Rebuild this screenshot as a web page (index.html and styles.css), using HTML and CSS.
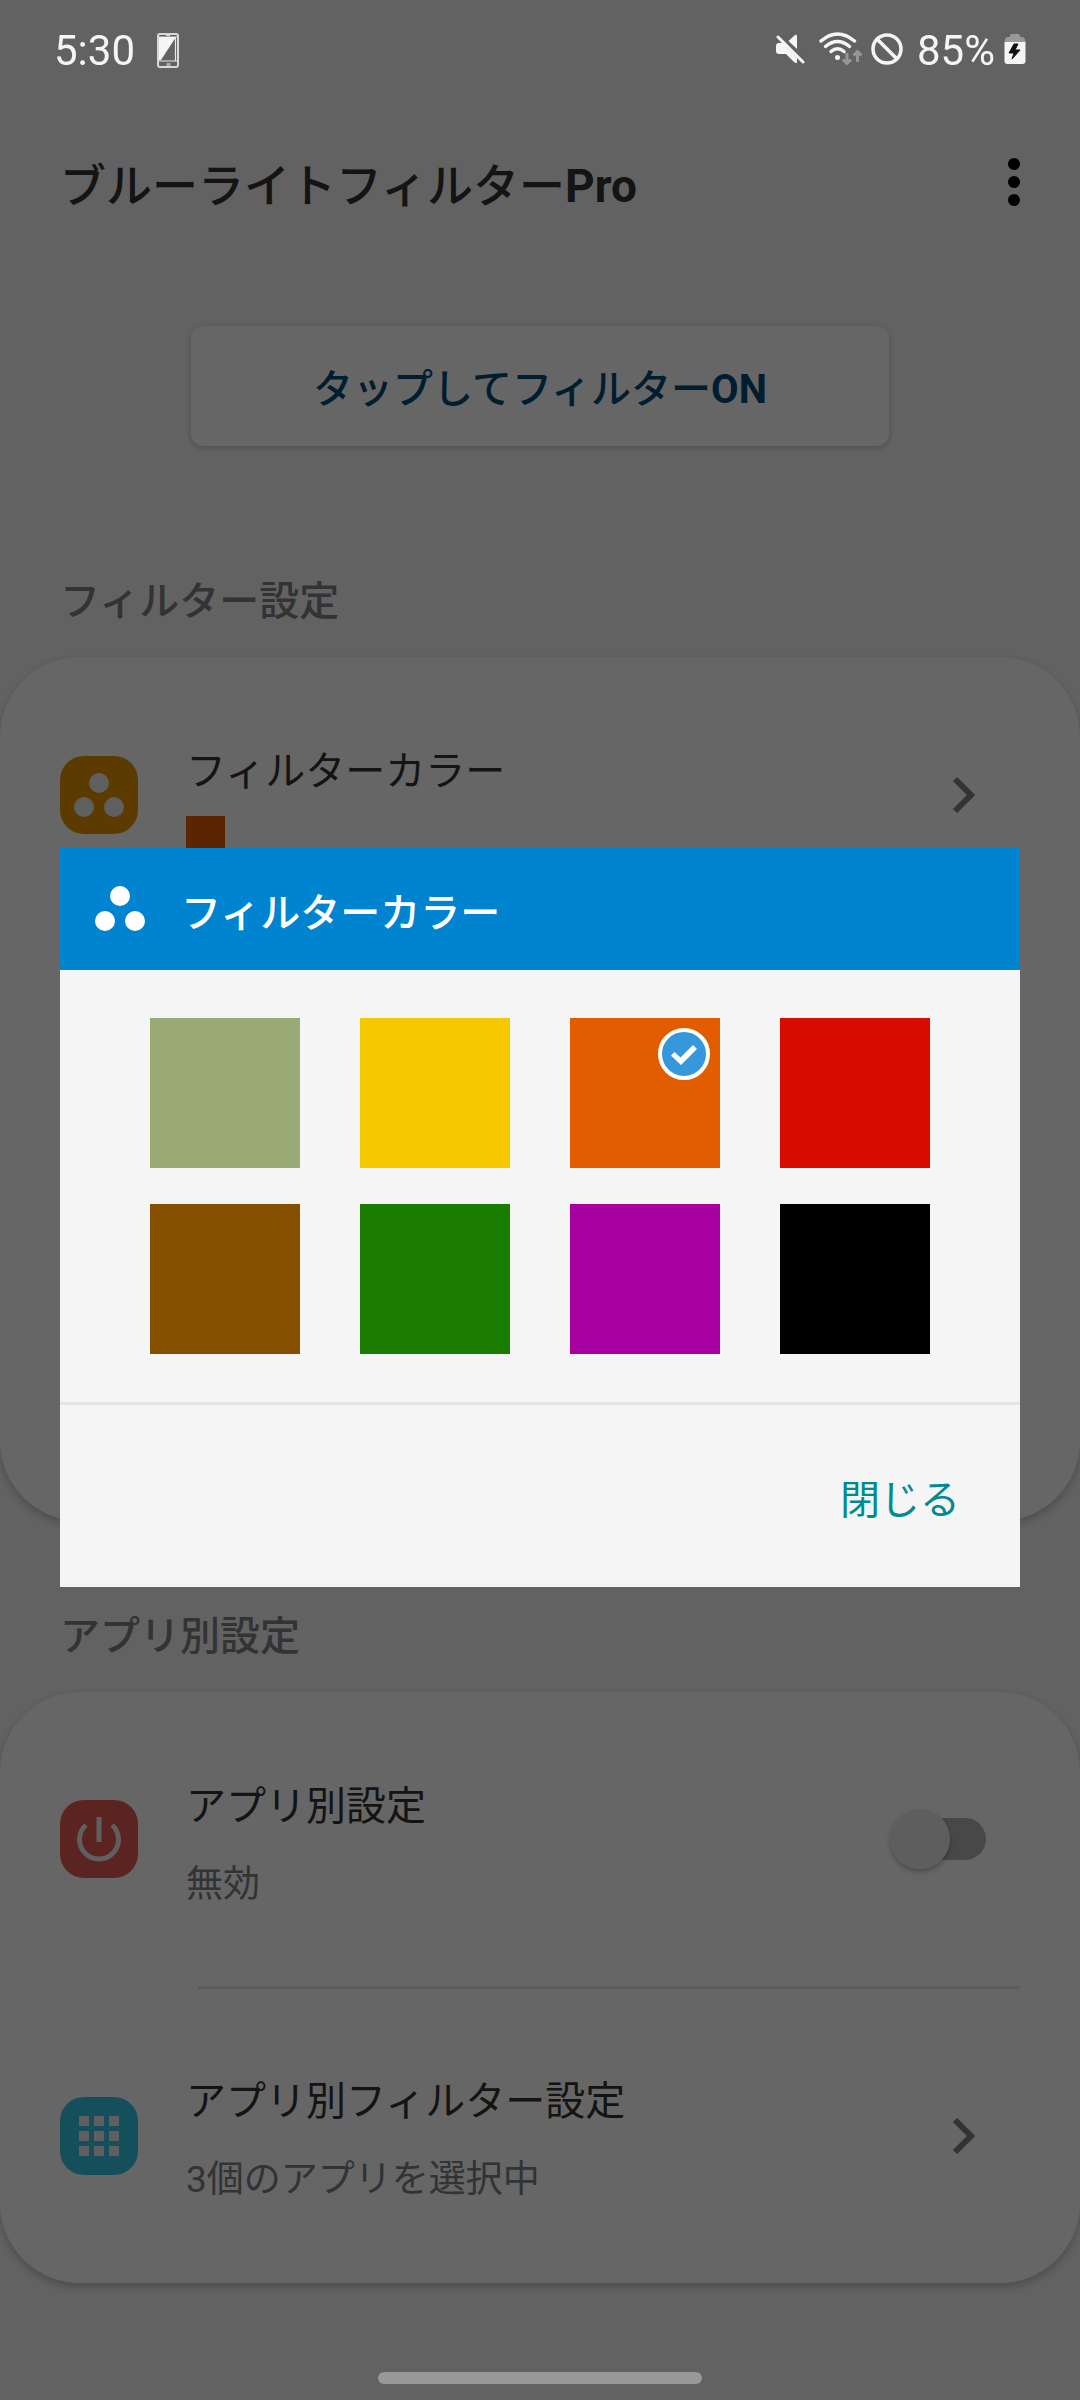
FILE: index.html
```html
<!DOCTYPE html>
<html lang="ja">
<head>
  <meta charset="utf-8">
  <meta name="viewport" content="width=device-width, initial-scale=1">
  <title>ブルーライトフィルターPro</title>
  <link rel="stylesheet" href="styles.css">
</head>
<body>
  <div class="status">
    <div class="status-left">
      <span class="status-text">5:30</span>
      <svg class="phone-icon" width="22" height="36" viewBox="0 0 22 36" aria-hidden="true">
        <rect x="1" y="1" width="20" height="33" rx="2" fill="none" stroke="#d8d8d8" stroke-width="2"/>
        <path d="M2 4H20M9 2.500h4" stroke="#d8d8d8" stroke-width="1.200"/>
        <path d="M2 4H19L4 27H2Z" fill="#f5f5f5"/>
        <path d="M2 28H20M18.500 4V28" stroke="#e6e6e6" stroke-width="1.200"/>
        <rect x="9.500" y="30" width="4" height="3" fill="#aaa"/>
      </svg>
    </div>
    <div class="status-right">
      <svg width="30" height="32" viewBox="0 0 30 32" aria-hidden="true">
        <path d="M1 13q0-3 3-3h4l14 15v5q-2 0-3-1L11 21H4q-3 0-3-3zM13.500 8 20 2q2-1 2 1v13z" fill="#f5f5f5"/>
        <path d="M5 2 29 26" stroke="#626262" stroke-width="2"/>
        <path d="M3 4 28 29" stroke="#f5f5f5" stroke-width="3" stroke-linecap="round"/>
      </svg>
      <svg class="wifi-icon" width="44" height="34" viewBox="0 0 44 34" aria-hidden="true">
        <g fill="none" stroke="#f5f5f5" stroke-width="3.500" stroke-linecap="round">
          <path d="M2 9Q18.500-5 35.500 9"/>
          <path d="M6.500 14.500Q18.500 4.500 30.500 14.500"/>
          <path d="M12 19.500Q18.500 14 25 19.500"/>
        </g>
        <circle cx="18.500" cy="25.500" r="2.500" fill="#f5f5f5"/>
        <g fill="none" stroke="#969696" stroke-width="3">
          <path d="M28 21V31M24 27.500 28 31.500 32 27.500"/>
          <path d="M38.500 30V20M34.500 23.500 38.500 19.500 42.500 23.500"/>
        </g>
      </svg>
      <svg class="block-icon" width="32" height="32" viewBox="0 0 32 32" aria-hidden="true">
        <circle cx="16" cy="16" r="14" fill="none" stroke="#f5f5f5" stroke-width="3.500"/>
        <path d="M6.500 6.500 25.500 25.500" stroke="#f5f5f5" stroke-width="3.500"/>
      </svg>
      <span class="status-text">85%</span>
      <svg class="battery-icon" width="22" height="32" viewBox="0 0 22 32" aria-hidden="true">
        <path d="M6 4V3q0-2 2-2h6q2 0 2 2v1h2q3 0 3.500 5H.500Q1 4 4 4z" fill="#999"/>
        <path d="M.500 9h21v19q0 3-3 3h-15q-3 0-3-3z" fill="#f5f5f5"/>
        <path d="M10 11 5 20h5l-2 6 8-9h-5l3-6z" fill="#111" stroke="#111" stroke-linejoin="round"/>
      </svg>
    </div>
  </div>

  <header class="app-bar">
    <h1 class="app-title">ブルーライトフィルター<span class="latin">Pro</span></h1>
    <button class="menu-button" type="button" aria-label="メニュー">
      <svg width="12" height="48" viewBox="0 0 12 48" aria-hidden="true">
        <circle cx="6" cy="6" r="6"/><circle cx="6" cy="24" r="6"/><circle cx="6" cy="42" r="6"/>
      </svg>
    </button>
  </header>

  <main>
    <div class="power">
      <button class="power-button" type="button">タップしてフィルター<span class="latin">ON</span></button>
    </div>

    <section class="group">
      <h2 class="group-title">フィルター設定</h2>
      <div class="card card-filter">
        <a class="row row-compact" href="#color">
          <svg class="row-icon" viewBox="0 0 78 78" aria-hidden="true">
            <rect width="78" height="78" rx="24" fill="#e69300"/>
            <g fill="#ededed"><circle cx="39" cy="27" r="10"/><circle cx="24" cy="51" r="10"/><circle cx="54" cy="51" r="10"/></g>
          </svg>
          <span class="row-text">
            <span class="row-title">フィルターカラー</span>
            <span class="current-color"></span>
          </span>
          <svg class="chevron" viewBox="0 0 44 44" aria-hidden="true"><path d="M13 6 29 22 13 38"/></svg>
        </a>
      </div>
    </section>

    <section class="group">
      <h2 class="group-title">アプリ別設定</h2>
      <div class="card">
        <label class="row">
          <svg class="row-icon" viewBox="0 0 78 78" aria-hidden="true">
            <rect width="78" height="78" rx="24" fill="#e35b53"/>
            <path d="M26 25A19.500 19.500 0 1 0 52 25M39 17V42" fill="none" stroke="#ededed" stroke-width="5"/>
          </svg>
          <span class="row-text">
            <span class="row-title">アプリ別設定</span>
            <span class="row-note">無効</span>
          </span>
          <input class="switch" type="checkbox" role="switch">
        </label>
        <hr class="row-divider">
        <a class="row" href="#apps">
          <svg class="row-icon" viewBox="0 0 78 78" aria-hidden="true">
            <rect width="78" height="78" rx="24" fill="#34c6e4"/>
            <path d="M19 19h10v10H19zM34 19h10v10H34zM49 19h10v10H49zM19 34h10v10H19zM34 34h10v10H34zM49 34h10v10H49zM19 49h10v10H19zM34 49h10v10H34zM49 49h10v10H49z" fill="#ededed"/>
          </svg>
          <span class="row-text">
            <span class="row-title">アプリ別フィルター設定</span>
            <span class="row-note"><span class="latin">3</span>個のアプリを選択中</span>
          </span>
          <svg class="chevron" viewBox="0 0 44 44" aria-hidden="true"><path d="M13 6 29 22 13 38"/></svg>
        </a>
      </div>
    </section>
  </main>

  <div class="home-bar"></div>

  <div class="scrim">
    <div class="dialog" role="dialog" aria-modal="true" aria-labelledby="dialog-title">
      <div class="dialog-head">
        <svg width="50" height="46" viewBox="0 0 50 46" fill="#fff" aria-hidden="true">
          <circle cx="25" cy="10" r="10"/><circle cx="10" cy="35" r="10"/><circle cx="40" cy="35" r="10"/>
        </svg>
        <h2 class="dialog-title" id="dialog-title">フィルターカラー</h2>
      </div>
      <div class="palette">
        <label class="swatch"><input class="swatch-input sage" type="radio" name="color" aria-label="セージ"></label>
        <label class="swatch"><input class="swatch-input yellow" type="radio" name="color" aria-label="イエロー"></label>
        <label class="swatch"><input class="swatch-input orange" type="radio" name="color" aria-label="オレンジ" checked>
          <svg class="check" viewBox="0 0 52 52" aria-hidden="true">
            <circle cx="26" cy="26" r="24" fill="#3498db" stroke="#fff" stroke-width="4"/>
            <path d="M13 27.500 16.500 24 22.500 29.500 35 17 39 21 23 37Z" fill="#fff"/>
          </svg>
        </label>
        <label class="swatch"><input class="swatch-input red" type="radio" name="color" aria-label="レッド"></label>
        <label class="swatch"><input class="swatch-input brown" type="radio" name="color" aria-label="ブラウン"></label>
        <label class="swatch"><input class="swatch-input green" type="radio" name="color" aria-label="グリーン"></label>
        <label class="swatch"><input class="swatch-input purple" type="radio" name="color" aria-label="パープル"></label>
        <label class="swatch"><input class="swatch-input black" type="radio" name="color" aria-label="ブラック"></label>
      </div>
      <div class="dialog-actions">
        <button class="close-button" type="button">閉じる</button>
      </div>
    </div>
  </div>
</body>
</html>
```
FILE: styles.css
```css
* {
  box-sizing: border-box;
}

body {
  margin: 0;
  min-height: 100vh;
  display: flex;
  flex-direction: column;
  overflow-x: hidden;
  background: #f5f5f5;
  color: #343434;
  font-family: "Noto Sans CJK JP", sans-serif;
  font-size: 40px;
  line-height: 60px;
}

h1,
h2 {
  margin: 0;
  font-size: inherit;
  font-weight: 500;
}

button {
  border: 0;
  padding: 0;
  background: none;
  font: inherit;
}

a {
  color: inherit;
  text-decoration: none;
}

svg {
  display: block;
  flex: none;
}

.latin {
  font-family: Roboto, sans-serif;
}

h1 .latin,
button .latin {
  font-weight: 700;
}

/* System bars stay above the scrim */
.status,
.home-bar {
  position: relative;
  z-index: 3;
}

.status {
  height: 98px;
  padding: 0 54px;
  display: flex;
  justify-content: space-between;
  color: #f5f5f5;
}

.status-left,
.status-right {
  display: flex;
  align-items: center;
}

.status-text {
  padding-top: 4px;
  font-family: Roboto, sans-serif;
  font-size: 42px;
}

.phone-icon {
  margin-left: 22px;
  margin-top: 4px;
}

.wifi-icon {
  margin-left: 14px;
}

.block-icon {
  margin: 0 14px 0 8px;
}

.battery-icon {
  margin-left: 9px;
}

.home-bar {
  width: 30%;
  height: 12px;
  margin: auto auto 16px;
  border-radius: 6px;
  background: #999;
}

.app-bar {
  height: 168px;
  padding: 0 60px;
  display: flex;
  align-items: center;
  justify-content: space-between;
}

.app-title {
  padding-top: 4px;
  font-size: 46px;
}

.power {
  padding: 60px 191px 40px;
}

.power-button {
  width: 100%;
  height: 120px;
  padding-top: 4px;
  border-radius: 12px;
  background: #fff;
  box-shadow: 0 2px 6px rgba(0, 0, 0, 0.2);
  color: #004d77;
  font-weight: 500;
}

.group {
  padding-top: 82px;
}

.group-title {
  padding: 0 60px;
  margin-bottom: 29px;
  color: #7b7f84;
}

.card {
  border-radius: 80px;
  background: #fff;
  box-shadow: 0 4px 8px rgba(0, 0, 0, 0.22);
}

.card-filter {
  min-height: 864px;
}

.row {
  min-height: 294px;
  padding: 0 94px 0 60px;
  display: flex;
  align-items: center;
}

.row-compact {
  min-height: 276px;
}

.row-icon {
  width: 78px;
  height: 78px;
}

.row-text {
  flex: 1;
  margin-left: 48px;
  padding-top: 4px;
  display: flex;
  flex-direction: column;
  gap: 20px;
}

.row-compact .row-text {
  padding-top: 2px;
  gap: 18px;
}

.row-note {
  color: #7b7f84;
  font-size: 37px;
  line-height: 56px;
}

.current-color {
  width: 39px;
  height: 39px;
  background: #e25c00;
}

.chevron {
  width: 44px;
  height: 44px;
  fill: none;
  stroke: #7b7f84;
  stroke-width: 6;
}

.row-divider {
  height: 3px;
  margin: 0 60px 0 198px;
  border: 0;
  background: #e6e6e6;
}

.switch {
  appearance: none;
  width: 96px;
  height: 60px;
  margin: 0;
  display: flex;
  align-items: center;
}

.switch::before {
  content: "";
  width: 60px;
  height: 60px;
  border-radius: 50%;
  background: #ececec;
  box-shadow: 0 3px 5px rgba(0, 0, 0, 0.25);
  z-index: 1;
}

.switch::after {
  content: "";
  width: 86px;
  height: 42px;
  margin-left: -50px;
  border-radius: 21px;
  background: #b4b4b4;
}

.scrim {
  position: fixed;
  inset: 0;
  z-index: 2;
  padding: 98px 60px 63px;
  display: flex;
  align-items: center;
  background: rgba(0, 0, 0, 0.6);
}

.dialog {
  flex: 1;
  background: #f5f5f5;
}

.dialog-head {
  height: 122px;
  padding: 0 35px;
  display: flex;
  align-items: center;
  gap: 36px;
  background: #0084d0;
  color: #fff;
}

.dialog-title {
  padding-top: 2px;
}

.palette {
  padding: 48px 90px;
  display: grid;
  grid-template-columns: repeat(4, 1fr);
  gap: 36px 60px;
  border-bottom: 3px solid #e4e4e4;
}

.swatch {
  position: relative;
}

.swatch-input {
  appearance: none;
  display: block;
  width: 100%;
  aspect-ratio: 1;
  margin: 0;
}

.check {
  position: absolute;
  top: 10px;
  right: 10px;
  width: 52px;
  height: 52px;
}

.sage { background: #9aaa75; }
.yellow { background: #f5c800; }
.orange { background: #e25c00; }
.red { background: #d80b00; }
.brown { background: #855100; }
.green { background: #1a7c00; }
.purple { background: #a800a0; }
.black { background: #000; }

.dialog-actions {
  height: 182px;
  padding: 2px 60px 0;
  display: flex;
  align-items: center;
  justify-content: flex-end;
}

.close-button {
  color: #008b92;
}
```
